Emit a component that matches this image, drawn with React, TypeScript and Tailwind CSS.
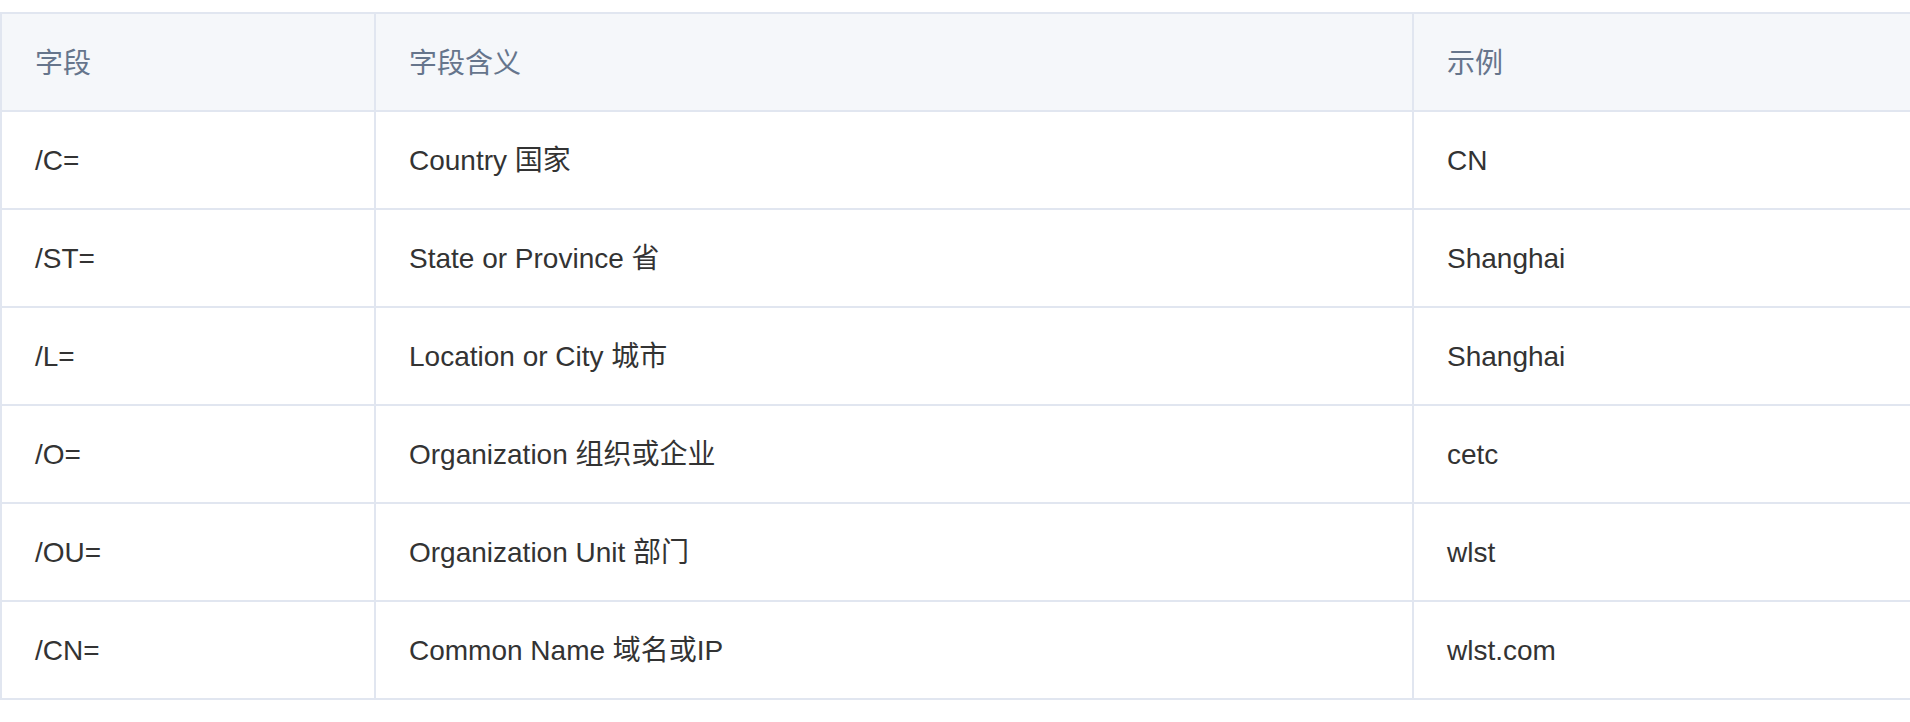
const rows = [
  { field: '/C=', meaning: 'Country 国家', example: 'CN' },
  { field: '/ST=', meaning: 'State or Province 省', example: 'Shanghai' },
  { field: '/L=', meaning: 'Location or City 城市', example: 'Shanghai' },
  { field: '/O=', meaning: 'Organization 组织或企业', example: 'cetc' },
  { field: '/OU=', meaning: 'Organization Unit 部门', example: 'wlst' },
  { field: '/CN=', meaning: 'Common Name 域名或IP', example: 'wlst.com' },
];

export default function App() {
  return (
    <div
      className="min-h-[722px] w-[1910px] overflow-hidden bg-white pt-[12px]"
      style={{ fontFamily: '"Liberation Sans", "Noto Sans CJK SC", sans-serif' }}
    >
      <table className="w-[1912px] border-collapse text-[28px] leading-none">
        <thead>
          <tr className="h-[98px] bg-[#f5f7fa] text-[#66758c]">
            <th className="w-[374px] border-2 border-[#e1e6f0] pl-[33px] pt-[4px] text-left font-normal">字段</th>
            <th className="w-[1038px] border-2 border-[#e1e6f0] pl-[33px] pt-[4px] text-left font-normal">字段含义</th>
            <th className="border-2 border-[#e1e6f0] pl-[33px] pt-[4px] text-left font-normal">示例</th>
          </tr>
        </thead>
        <tbody className="text-[#333333]">
          {rows.map((r) => (
            <tr key={r.field} className="h-[98px]">
              <td className="border-2 border-[#e1e6f0] pl-[33px] pt-[2px]">{r.field}</td>
              <td className="border-2 border-[#e1e6f0] pl-[33px] pt-[2px]">{r.meaning}</td>
              <td className="border-2 border-[#e1e6f0] pl-[33px] pt-[2px]">{r.example}</td>
            </tr>
          ))}
        </tbody>
      </table>
    </div>
  );
}
